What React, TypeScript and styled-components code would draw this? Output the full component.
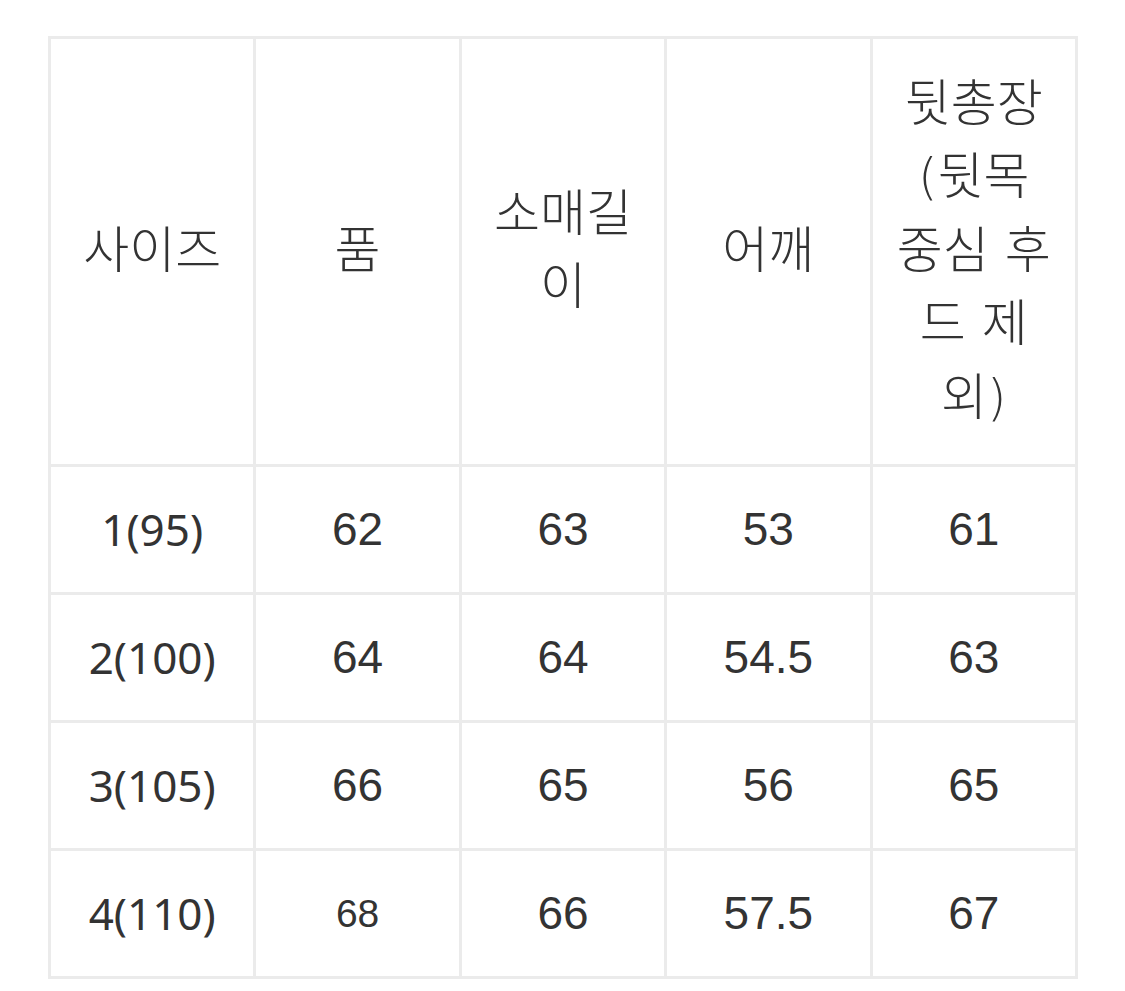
import styled, { createGlobalStyle } from "styled-components";

const GlobalStyle = createGlobalStyle`
  body {
    margin: 0;
    background: #ffffff;
  }
`;

const headers = ["사이즈", "품", "소매길이", "어깨", "뒷총장(뒷목 중심 후드 제외)"];

const rows: { size: string; values: { v: string; small?: boolean }[] }[] = [
  { size: "1(95)", values: [{ v: "62" }, { v: "63" }, { v: "53" }, { v: "61" }] },
  { size: "2(100)", values: [{ v: "64" }, { v: "64" }, { v: "54.5" }, { v: "63" }] },
  { size: "3(105)", values: [{ v: "66" }, { v: "65" }, { v: "56" }, { v: "65" }] },
  { size: "4(110)", values: [{ v: "68", small: true }, { v: "66" }, { v: "57.5" }, { v: "67" }] },
];

const App = () => {
  return (
    <SPage>
      <GlobalStyle />
      <STable>
        <thead>
          <tr>
            {headers.map((h) => (
              <SHead key={h}>{h}</SHead>
            ))}
          </tr>
        </thead>
        <tbody>
          {rows.map((r) => (
            <tr key={r.size}>
              <SSizeCell>{r.size}</SSizeCell>
              {r.values.map((c, i) => (
                <SCell key={i} small={c.small}>
                  {c.v}
                </SCell>
              ))}
            </tr>
          ))}
        </tbody>
      </STable>
    </SPage>
  );
};

export default App;

const SPage = styled.div`
  padding: 36px 0 0 48px;
`;

const STable = styled.table`
  width: 1030px;
  table-layout: fixed;
  border-collapse: separate;
  border-spacing: 0;
  border-top: 3px solid #ebebeb;
  border-left: 3px solid #ebebeb;
  color: #333333;
`;

const SHead = styled.th`
  font-family: "DejaVu Sans", "Noto Sans CJK KR", sans-serif;
  font-weight: 300;
  font-size: 50px;
  line-height: 73.6px;
  padding: 28.5px 24px;
  text-align: center;
  vertical-align: middle;
  border-right: 3px solid #ebebeb;
  border-bottom: 3px solid #ebebeb;
`;

const SCell = styled.td<{ small?: boolean }>`
  font-family: "Liberation Sans", Arial, sans-serif;
  font-size: ${({ small }) => (small ? "39px" : "46px")};
  line-height: 73.6px;
  padding: 25.7px 24px;
  text-align: center;
  vertical-align: middle;
  border-right: 3px solid #ebebeb;
  border-bottom: 3px solid #ebebeb;
`;

const SSizeCell = styled(SCell)`
  font-family: "Noto Sans", "Open Sans", sans-serif;
  font-size: 44px;
`;
